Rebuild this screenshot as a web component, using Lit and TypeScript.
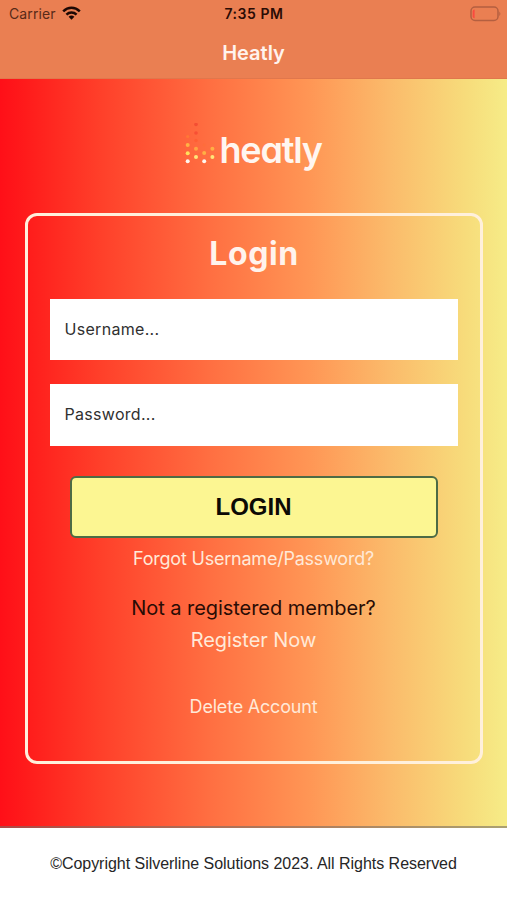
import { LitElement, html, css, svg } from "lit";
import { customElement } from "lit/decorators.js";

// Logo mark dots: x, y, radius, colour, opacity
const DOTS: [number, number, number, string, number][] = [
  [2.7, 28.7, 2, "#fff6ee", 1],
  [2.7, 20.7, 2, "#ffe05c", 1],
  [2.7, 12.5, 2, "#ffb245", 1],
  [2.7, 4, 1.6, "#ff7a35", 0.9],
  [11, 24.5, 2, "#ffe679", 1],
  [11, 16.3, 2, "#ffa443", 1],
  [11, 8, 1.7, "#ff5c32", 0.8],
  [11, 0.5, 1.8, "#f23a2c", 0.55],
  [11, -8, 1.8, "#e93428", 0.5],
  [19.2, 28.7, 2, "#fff6ee", 1],
  [19.2, 20.5, 2, "#ffaf45", 1],
  [19.2, 12.5, 1.5, "#ff6e38", 0.6],
  [27.4, 24.5, 2, "#ffe679", 1],
  [27.4, 16.3, 2, "#ffaf45", 1],
];

@customElement("app-root")
export class AppRoot extends LitElement {
  static styles = css`
    :host {
      display: flex;
      flex-direction: column;
      width: 507px;
      height: 900px;
      overflow: hidden;
      background: #fff;
      font-family: Inter, "Liberation Sans", sans-serif;
      color: #2a0c05;
    }
    * { box-sizing: border-box; }
    header {
      flex: none;
      height: 79px;
      background: #ea7f52;
      border-bottom: 1px solid #e0774c;
    }
    .status {
      display: grid;
      grid-template-columns: 1fr auto 1fr;
      align-items: center;
      height: 28px;
      padding: 0 5px 0 9px;
      font-size: 14px;
      line-height: 28px;
    }
    .carrier { display: flex; align-items: center; gap: 6px; color: #582a18; letter-spacing: 0.1px; }
    .carrier svg { margin-top: -2px; }
    .time { font-weight: 600; letter-spacing: 0.55px; margin-right: 3px; }
    .battery { justify-self: end; margin-top: -1px; }
    svg { display: block; }
    .title {
      height: 50px;
      line-height: 50px;
      text-align: center;
      font-size: 20px;
      font-weight: 600;
      color: #fff3ed;
    }
    main {
      flex: none;
      height: 749px;
      display: flex;
      flex-direction: column;
      align-items: center;
      border-bottom: 2px solid rgba(120, 110, 100, 0.6);
      background: linear-gradient(90deg, #ff0f18 0%, #ff1b1b 5%, #ff402a 20%, #ff7042 42%, #ff9655 61%, #fbbb6b 77%, #f7dc7b 92%, #f6ec87 100%);
    }
    .logo {
      display: flex;
      height: 62px;
      margin-top: 40px;
      padding-top: 4px;
      gap: 5px;
    }
    .word {
      font-size: 36px;
      line-height: 54px;
      font-weight: 600;
      font-feature-settings: "cv11";
      letter-spacing: -1.2px;
      color: #fff6f0;
      width: 103px;
      white-space: nowrap;
    }
    .card {
      width: 458px;
      height: 551px;
      margin-top: 32px;
      border: 3px solid #fff0dc;
      border-radius: 12px;
      display: flex;
      flex-direction: column;
      align-items: center;
    }
    h1 {
      margin: 18px 0 0;
      padding-left: 1px;
      font-size: 32px;
      line-height: 40px;
      font-weight: 700;
      letter-spacing: 0.6px;
      color: #fff3ec;
    }
    .field {
      width: 408px;
      height: 61px;
      margin-top: 25px;
      padding-left: 15px;
      background: #fff;
      font-size: 16px;
      letter-spacing: 0.3px;
      line-height: 60px;
      color: #303030;
    }
    .field + .field { height: 62px; margin-top: 24px; }
    .button {
      width: 368px;
      height: 62px;
      margin-top: 30px;
      border: 2px solid #4d6b45;
      border-radius: 6px;
      background: #fcf692;
      font: 700 24px/58px "Liberation Sans", sans-serif;
      color: #0c0a05;
      text-align: center;
    }
    .link { color: #ffe9d8; white-space: nowrap; }
    .forgot { margin-top: 8px; font-size: 18px; line-height: 26px; letter-spacing: -0.22px; }
    .ask { margin-top: 22px; font-size: 20px; line-height: 28px; white-space: nowrap; letter-spacing: -0.05px; }
    .register { margin-top: 4px; font-size: 20px; line-height: 28px; letter-spacing: -0.05px; }
    .delete { margin-top: 40px; font-size: 18px; line-height: 26px; letter-spacing: -0.2px; }
    footer {
      flex: 1;
      text-align: center;
      white-space: nowrap;
      font: 16px/72px "Liberation Sans", sans-serif;
      letter-spacing: -0.03px;
      color: #262626;
    }
  `;

  render() {
    return html`
      <header>
        <div class="status">
          <span class="carrier"><span>Carrier</span>
            <svg width="19" height="14" viewBox="0 0 19 14" fill="none" stroke="#1d0804" stroke-width="2.5">
              <path d="M1.2 5.3C6 .6 13 .6 17.8 5.3" />
              <path d="M4.4 8.6C7.3 5.9 11.7 5.9 14.6 8.6" />
              <path d="M9.5 13.8L6.6 10.8Q9.5 8.4 12.4 10.8Z" fill="#1d0804" stroke="none" />
            </svg>
          </span>
          <span class="time">7:35 PM</span>
          <svg class="battery" width="32" height="16" viewBox="0 0 32 16">
            <rect x="1" y="1" width="27" height="13.5" rx="4" fill="none" stroke="#b45f40" stroke-width="1.5" />
            <path d="M4.6 3.4Q2.7 3.4 2.7 5.4V10.2Q2.7 12.2 4.6 12.2Z" fill="#fb4a3f" />
            <path d="M29.3 5.4Q31.5 7.8 29.3 10.1Z" fill="#b45f40" />
          </svg>
        </div>
        <div class="title">Heatly</div>
      </header>
      <main>
        <div class="logo">
          <svg width="30" height="42" viewBox="0 -9.5 30 42">
            ${DOTS.map(([x, y, r, c, o]) => svg`<circle cx=${x} cy=${y} r=${r} fill=${c} opacity=${o} />`)}
          </svg>
          <span class="word">heatly</span>
        </div>
        <section class="card">
          <h1>Login</h1>
          <div class="field">Username...</div>
          <div class="field">Password...</div>
          <div class="button">LOGIN</div>
          <div class="link forgot">Forgot Username/Password?</div>
          <div class="ask">Not a registered member?</div>
          <div class="link register">Register Now</div>
          <div class="link delete">Delete Account</div>
        </section>
      </main>
      <footer>©Copyright Silverline Solutions 2023. All Rights Reserved</footer>
    `;
  }
}
